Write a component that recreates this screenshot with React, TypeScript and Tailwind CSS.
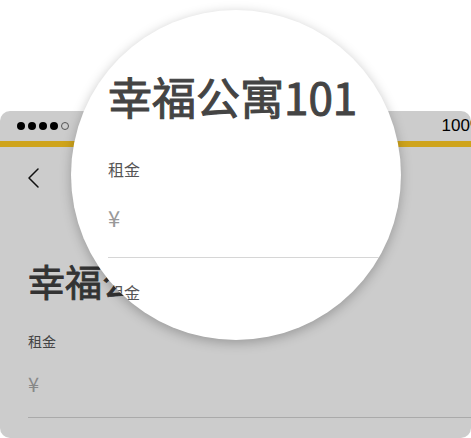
const font = { fontFamily: '"Noto Sans CJK SC", "Noto Sans", sans-serif' }

function Chevron() {
  return (
    <svg width="14" height="20" viewBox="0 0 14 20" fill="none" stroke="#111" strokeWidth="1.5" strokeLinecap="round" strokeLinejoin="round">
      <polyline points="11,1 2,10 11,19" />
    </svg>
  )
}

export default function App() {
  return (
    <div className="relative w-[471px] h-[438px] bg-white overflow-hidden" style={font}>
      {/* phone screen */}
      <div className="mt-[111px] h-[327px] w-[471px] bg-[#cccccc] rounded-[10px] overflow-hidden">
        <div className="h-[30px] flex items-center pl-[17px]">
          <div className="flex items-center gap-[3px]">
            <span className="w-[8px] h-[8px] rounded-full bg-black" />
            <span className="w-[8px] h-[8px] rounded-full bg-black" />
            <span className="w-[8px] h-[8px] rounded-full bg-black" />
            <span className="w-[8px] h-[8px] rounded-full bg-black" />
            <span className="w-[8px] h-[8px] rounded-full border border-[#555]" />
          </div>
          <div className="flex-1" />
          <span className="text-[17px] text-black whitespace-nowrap mr-[-14px] font-['Liberation_Sans']">100%</span>
        </div>
        <div className="h-[6px] bg-[#cfa41c]" />
        <div className="mt-[21px] pl-[27px] h-[20px]">
          <Chevron />
        </div>
        <div className="pl-[28px]">
          <h1 className="mt-[71px] text-[37px] leading-[44px] text-[#333] whitespace-nowrap [-webkit-text-stroke:0.8px_#333]">幸福公寓101</h1>
          <p className="mt-[28px] text-[14px] leading-[20px] text-[#444]">租金</p>
          <p className="mt-[19px] text-[20px] leading-[28px] text-[#888]">¥</p>
          <div className="mt-[19px] border-t border-[#aaaaaa]" />
        </div>
      </div>

      {/* magnifier */}
      <div className="absolute left-[71px] top-[10px] w-[330px] h-[330px] rounded-full bg-white overflow-hidden shadow-[0_3px_12px_rgba(0,0,0,0.25)]">
        <div className="pt-[59px] pl-[37px]">
          <h2 className="text-[44px] leading-[54px] text-[#444] whitespace-nowrap [-webkit-text-stroke:1px_#444]">幸福公寓101</h2>
          <p className="mt-[35px] text-[16px] leading-[22px] text-[#555]">租金</p>
          <p className="mt-[22px] text-[22px] leading-[30px] text-[#999]">¥</p>
          <div className="mt-[25px] border-t border-[#d6d6d6]" />
          <p className="mt-[23px] text-[16px] leading-[22px] text-[#555]">租金</p>
        </div>
      </div>
    </div>
  )
}
